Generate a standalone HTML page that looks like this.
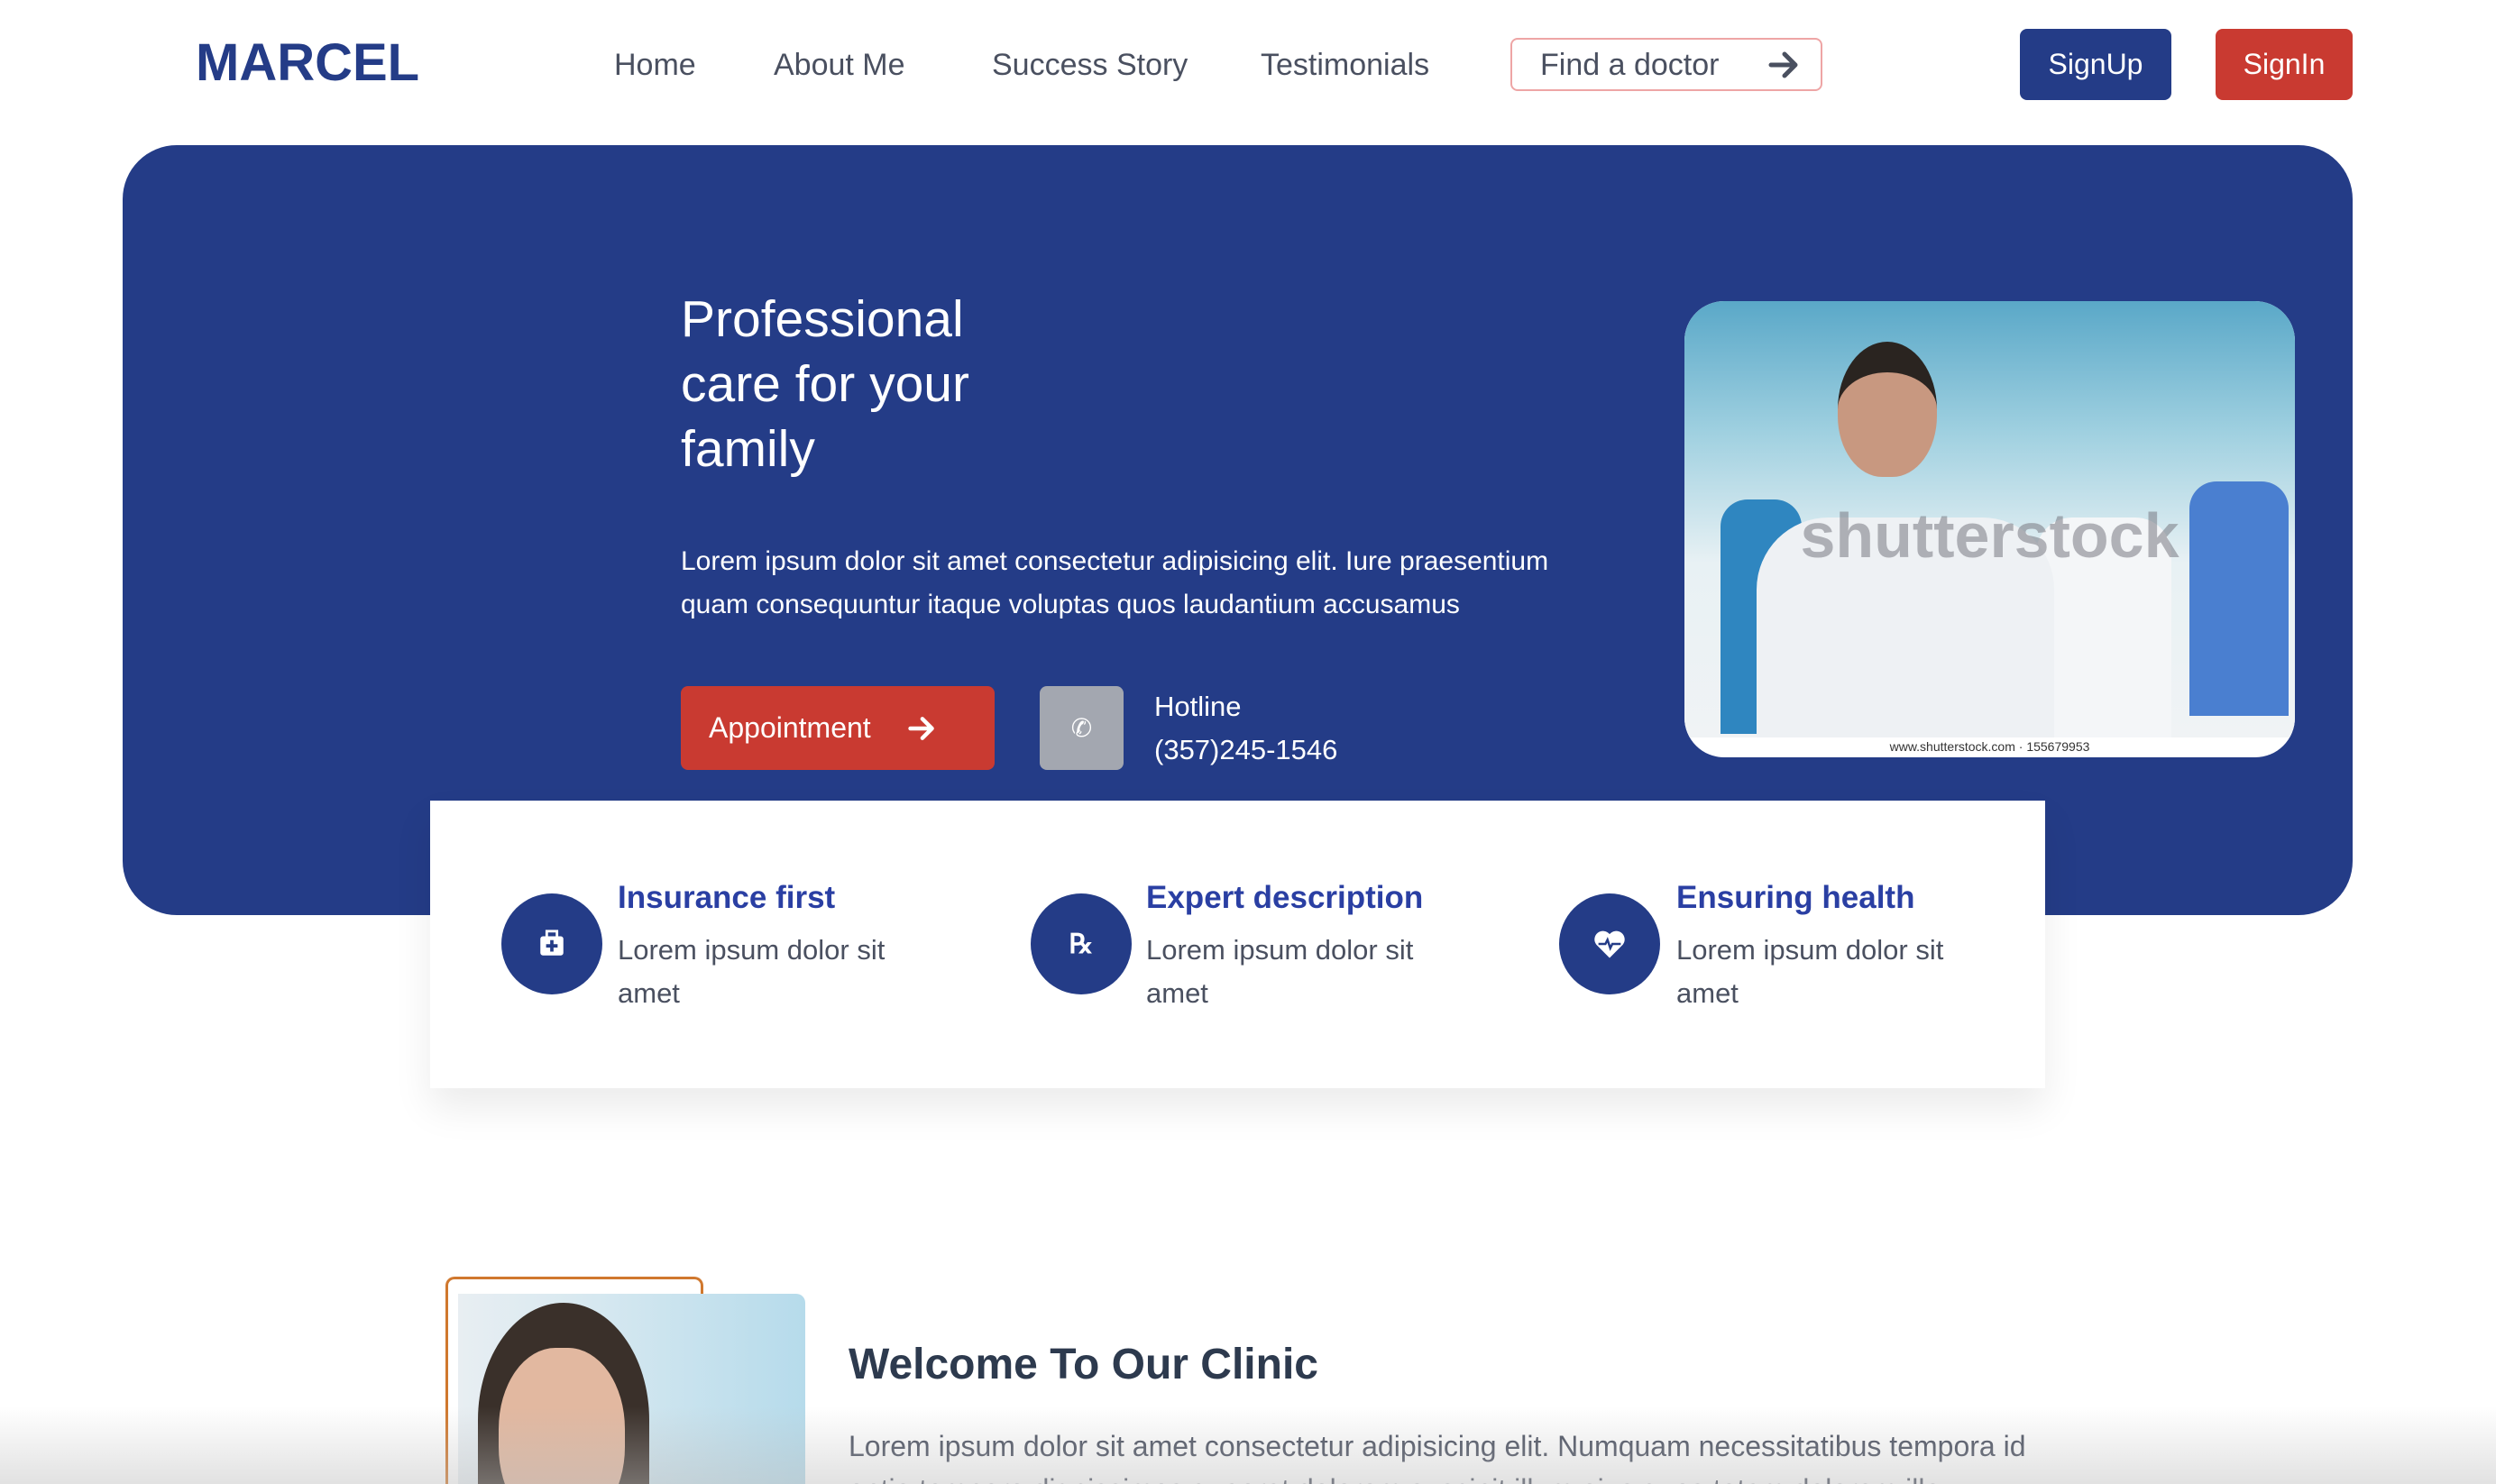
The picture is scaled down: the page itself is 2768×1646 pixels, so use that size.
<!DOCTYPE html>
<html><head><meta charset="utf-8">
<style>
*{margin:0;padding:0;box-sizing:border-box}
html,body{width:2768px;height:1646px;overflow:hidden;background:#fff;font-family:"Liberation Sans",sans-serif;position:relative}
.a{position:absolute}
.nav{color:#4a5060;font-size:34px;top:53px}
.logo{left:217px;top:36px;font-size:58px;font-weight:bold;color:#243c87;letter-spacing:0px}
.btn{border-radius:8px;color:#fff;font-size:32px;display:flex;align-items:center;justify-content:center}
.hero{left:136px;top:161px;width:2473px;height:854px;background:#243c87;border-radius:60px}
.card{left:477px;top:888px;width:1791px;height:319px;background:#fff;box-shadow:0 22px 40px rgba(0,0,0,.08)}
.circ{width:112px;height:112px;border-radius:50%;background:#243c87;top:991px;display:flex;align-items:center;justify-content:center}
.h{top:976px;font-size:35px;font-weight:bold;color:#2a3fa3}
.t{top:1030px;font-size:31px;color:#4a5060;line-height:48px}
</style></head><body>
<div class="a logo">MARCEL</div>
<div class="a nav" style="left:681px">Home</div>
<div class="a nav" style="left:858px">About Me</div>
<div class="a nav" style="left:1100px">Success Story</div>
<div class="a nav" style="left:1398px">Testimonials</div>
<div class="a" style="left:1675px;top:42px;width:346px;height:59px;border:2px solid #eea5a5;border-radius:8px"></div>
<div class="a nav" style="left:1708px">Find a doctor</div>
<svg class="a" style="left:1960px;top:54px" width="36" height="36" viewBox="0 0 36 36"><path d="M4 18H30M19 6L31 18L19 30" stroke="#4a5060" stroke-width="5" fill="none" stroke-linecap="round" stroke-linejoin="round"/></svg>
<div class="a btn" style="left:2240px;top:32px;width:168px;height:79px;background:#243c87">SignUp</div>
<div class="a btn" style="left:2457px;top:32px;width:152px;height:79px;background:#c93a31">SignIn</div>

<div class="a hero"></div>
<div class="a" style="left:755px;top:318px;font-size:57px;line-height:72px;color:#fff">Professional<br>care for your<br>family</div>
<div class="a" style="left:755px;top:599px;font-size:30px;line-height:48px;color:#fff;width:1000px">Lorem ipsum dolor sit amet consectetur adipisicing elit. Iure praesentium quam consequuntur itaque voluptas quos laudantium accusamus</div>
<div class="a btn" style="left:755px;top:761px;width:348px;height:93px;background:#c93a31;justify-content:flex-start;padding-left:31px">Appointment
<svg style="margin-left:40px" width="32" height="32" viewBox="0 0 36 36"><path d="M4 18H30M19 6L31 18L19 30" stroke="#fff" stroke-width="5" fill="none" stroke-linecap="round" stroke-linejoin="round"/></svg></div>
<div class="a btn" style="left:1153px;top:761px;width:93px;height:93px;background:#a3a7b0;font-size:28px">✆</div>
<div class="a" style="left:1280px;top:760px;font-size:31px;line-height:48px;color:#fff">Hotline<br>(357)245-1546</div>

<div class="a" style="left:1868px;top:334px;width:677px;height:506px;border-radius:44px;background:#fff;overflow:hidden">
 <div class="a" style="left:0;top:0;width:677px;height:484px;background:linear-gradient(180deg,#5aa8c8 0%,#9fd0e0 30%,#e8f1f4 60%,#f0f3f5 100%)"></div>
 <div class="a" style="left:40px;top:220px;width:90px;height:260px;background:#2f86c0;border-radius:30px 30px 0 0"></div>
 <div class="a" style="left:560px;top:200px;width:110px;height:260px;background:#4a7fd0;border-radius:30px 30px 0 0"></div>
 <div class="a" style="left:390px;top:240px;width:150px;height:244px;background:#f4f6f8;border-radius:40px 40px 0 0"></div>
 <div class="a" style="left:80px;top:240px;width:330px;height:244px;background:#eef1f4;border-radius:80px 80px 0 0"></div>
 <div class="a" style="left:170px;top:45px;width:110px;height:150px;background:#c89880;border-radius:50% 50% 45% 45%;border-top:34px solid #2a2420"></div>
 <div class="a" style="left:0;top:220px;width:677px;text-align:center;font-size:70px;font-weight:bold;color:rgba(120,120,130,.55)">shutterstock</div>
 <div class="a" style="left:0;top:486px;width:677px;text-align:center;font-size:14px;color:#333">www.shutterstock.com · 155679953</div>
</div>

<div class="a card"></div>
<div class="a circ" style="left:556px"><svg width="34" height="34" viewBox="0 0 24 24"><rect x="3" y="6" width="18" height="15" rx="2" fill="#fff"/><rect x="8" y="2" width="8" height="5" fill="none" stroke="#fff" stroke-width="2"/><path d="M12 9v9M7.5 13.5h9" stroke="#243c87" stroke-width="2.6"/></svg></div>
<div class="a circ" style="left:1143px;color:#fff;font-weight:bold;font-size:30px">℞</div>
<div class="a circ" style="left:1729px"><svg width="38" height="34" viewBox="0 0 24 22"><path d="M12 21L2.5 11.5A5.5 5.5 0 0 1 12 4A5.5 5.5 0 0 1 21.5 11.5Z" fill="#fff"/><path d="M4 11h5l1.5-3 2 6 1.5-3h6" stroke="#243c87" stroke-width="1.6" fill="none"/></svg></div>
<div class="a h" style="left:685px">Insurance first</div>
<div class="a h" style="left:1271px">Expert description</div>
<div class="a h" style="left:1859px">Ensuring health</div>
<div class="a t" style="left:685px">Lorem ipsum dolor sit<br>amet</div>
<div class="a t" style="left:1271px">Lorem ipsum dolor sit<br>amet</div>
<div class="a t" style="left:1859px">Lorem ipsum dolor sit<br>amet</div>

<div class="a" style="left:494px;top:1416px;width:286px;height:260px;border:3px solid #d0782e;border-bottom:none;border-radius:10px 10px 0 0"></div>
<div class="a" style="left:508px;top:1435px;width:385px;height:240px;background:linear-gradient(90deg,#e8eef2 0%,#d6e8f0 40%,#b6dbeb 100%);border-radius:0 10px 0 0;overflow:hidden">
 <div class="a" style="left:22px;top:10px;width:190px;height:260px;background:#3a302a;border-radius:50% 50% 0 0"></div>
 <div class="a" style="left:45px;top:60px;width:140px;height:200px;background:#e2b8a0;border-radius:45%"></div>
</div>
<div class="a" style="left:941px;top:1486px;font-size:48px;font-weight:bold;color:#2d3a4e">Welcome To Our Clinic</div>
<div class="a" style="left:941px;top:1580px;font-size:32px;line-height:48px;color:#4a5060;white-space:nowrap">Lorem ipsum dolor sit amet consectetur adipisicing elit. Numquam necessitatibus tempora id<br>optio tempore dignissimos quaerat dolorem suscipit illum eius quos totam dolorem illo</div>
<div class="a" style="left:0;top:1560px;width:2768px;height:86px;background:linear-gradient(180deg,rgba(200,200,200,0) 0%,rgba(190,190,190,.45) 100%)"></div>
</body></html>
